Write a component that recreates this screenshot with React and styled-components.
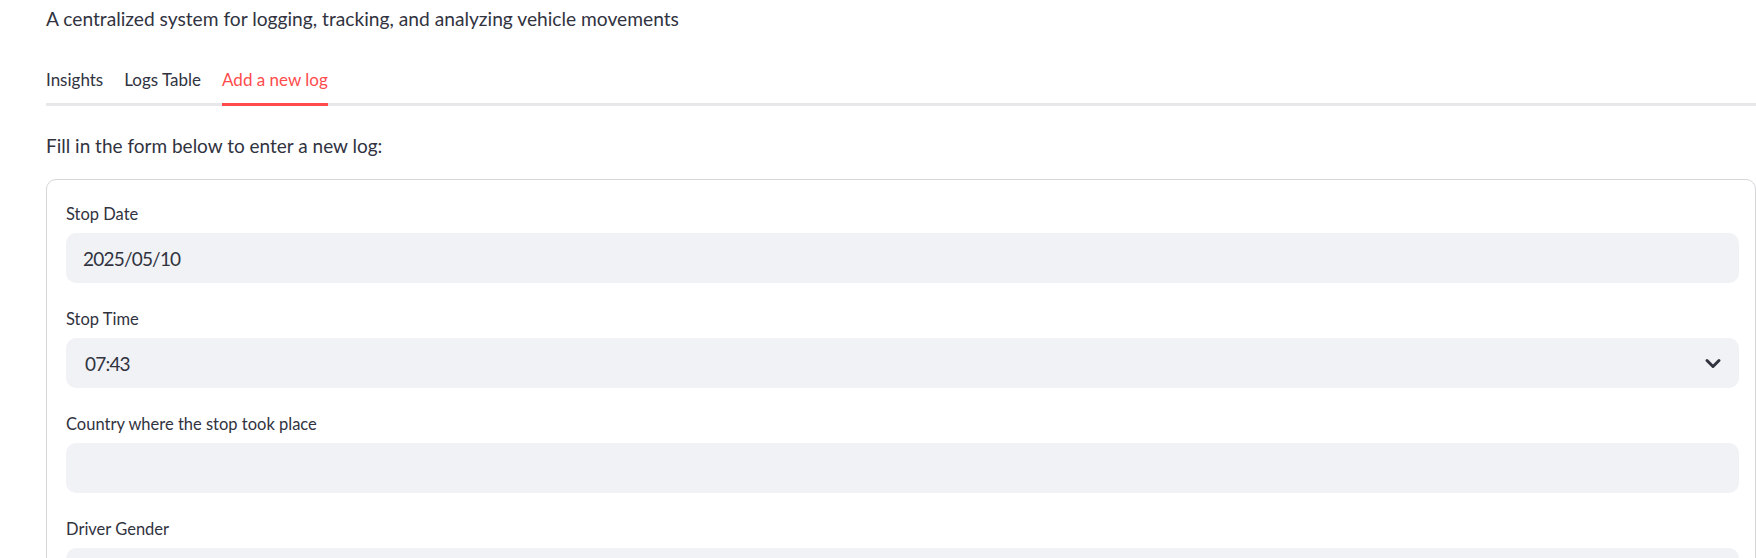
import React from 'react'
import styled, { createGlobalStyle } from 'styled-components'

const GlobalStyle = createGlobalStyle`
  body {
    margin: 0;
    background: #ffffff;
    overflow: hidden;
    font-family: Lato, "Noto Sans", sans-serif;
    color: #31333f;
  }
`

const Root = styled.main`
  padding: 4px 0 0 46px;
`

const Description = styled.p`
  margin: 0;
  font-size: 19.2px;
  line-height: 30px;
`

const TabBar = styled.div`
  display: flex;
  gap: 21px;
  margin-top: 24px;
  box-shadow: inset 0 -3px 0 #e8e8ea;
`

const Tab = styled.div`
  font-size: 17px;
  line-height: 24px;
  padding: 10px 0 11px;
  color: ${p => (p.active ? '#ff4b4b' : '#31333f')};
  border-bottom: 3px solid ${p => (p.active ? '#ff4b4b' : 'transparent')};
  cursor: pointer;
`

const Intro = styled.p`
  margin: 25px 0 18px;
  font-size: 19px;
  line-height: 30px;
`

const Card = styled.form`
  border: 1px solid #d6d6d9;
  border-radius: 10px;
  padding: 23px 16px 30px 19px;
  display: flex;
  flex-direction: column;
  gap: 25px;
`

const Field = styled.div`
  display: flex;
  flex-direction: column;
`

const Label = styled.label`
  font-size: 16.5px;
  line-height: 22px;
  margin-bottom: 8px;
`

const InputBox = styled.div`
  height: 50px;
  background: #f0f2f6;
  border-radius: 10px;
  display: flex;
  align-items: center;
  justify-content: space-between;
  padding: 0 14px 0 ${p => (p.select ? '19px' : '17px')};
  font-size: 19px;
  letter-spacing: -0.8px;
  box-sizing: border-box;
`

const Chevron = () => (
  <svg width="24" height="24" viewBox="0 0 24 24" fill="none" stroke="#31333f" strokeWidth="3" strokeLinecap="round" strokeLinejoin="round">
    <path d="M6 9.5l6 6 6-6" />
  </svg>
)

const fields = [
  { label: 'Stop Date', value: '2025/05/10' },
  { label: 'Stop Time', value: '07:43', select: true },
  { label: 'Country where the stop took place', value: '' },
  { label: 'Driver Gender', value: '', select: true },
]

const App = () => (
  <Root>
    <GlobalStyle />
    <Description>A centralized system for logging, tracking, and analyzing vehicle movements</Description>

    <TabBar>
      <Tab>Insights</Tab>
      <Tab>Logs Table</Tab>
      <Tab active>Add a new log</Tab>
    </TabBar>

    <Intro>Fill in the form below to enter a new log:</Intro>

    <Card>
      { fields.map(field => (
        <Field key={field.label}>
          <Label>{field.label}</Label>
          <InputBox select={field.select}>
            <span>{field.value}</span>
            { field.select && field.value && <Chevron /> }
          </InputBox>
        </Field>
      )) }
    </Card>
  </Root>
)

export default App
